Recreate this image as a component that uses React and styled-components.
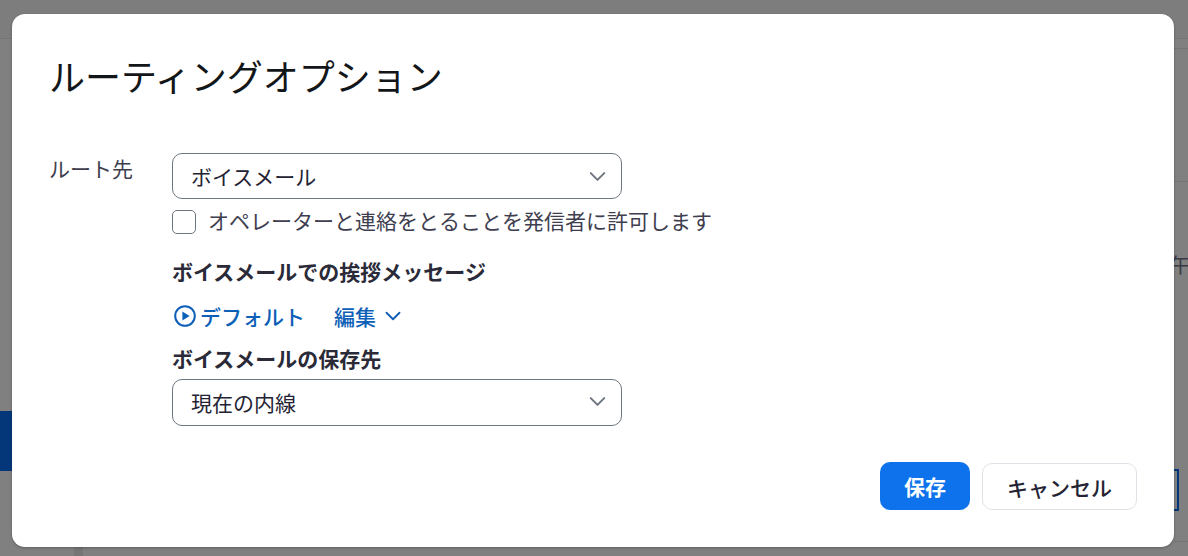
import React from "react";
import styled, { createGlobalStyle } from "styled-components";
import { ChevronDown } from "lucide-react";

const Global = createGlobalStyle`
  html, body { margin: 0; padding: 0; background: #808080; }
  body { font-family: "Noto Sans CJK JP", "Noto Sans", sans-serif; overflow: hidden; }
  * { box-sizing: border-box; }
`;

const Page = styled.div`
  position: relative;
  width: 1188px;
  height: 556px;
  overflow: hidden;
  background: #808080;
`;

const Backdrop = styled.div`
  height: 100%;
  display: flex;
  flex-direction: column;
`;

const TopBar = styled.div`
  height: 39px;
  flex: none;
  border-bottom: 1px solid #757575;
  background: #7d7d7d;
  display: flex;
  justify-content: flex-end;
  gap: 50px;
  padding-right: 58px;
`;

const TopLink = styled.span`
  margin-top: -26px;
  height: 30px;
  font-size: 20.8px;
  line-height: 30px;
  color: #2b2b3a;
`;

const MainRow = styled.div`
  flex: 1;
  display: flex;
  justify-content: space-between;
`;

const NavRail = styled.div`
  width: 83px;
  border-right: 9px solid #767676;
  padding-top: 372px;
`;

const NavItem = styled.div`
  width: 14px;
  height: 60px;
  background: #04377a;
`;

const RightRail = styled.div`
  width: 14px;
  display: flex;
  flex-direction: column;
  align-items: flex-end;
`;

const RailTab = styled.div`
  width: 100%;
  height: 10px;
  flex: none;
  border-bottom: 1px solid #757575;
`;

const RailRule = styled.div`
  width: 100%;
  height: 133px;
  flex: none;
  border-bottom: 1px solid #757575;
`;

const RailText = styled.div`
  width: 100%;
  height: 30px;
  margin-top: 67px;
  text-indent: -4px;
  white-space: nowrap;
  font-size: 20.8px;
  line-height: 30px;
  color: #3a3a46;
`;

const EdgeButton = styled.div`
  width: 5px;
  height: 42px;
  flex: none;
  margin-top: 190px;
  margin-right: 9px;
  border: 2px solid #04377a;
  border-left: 0;
`;

const RailBottomRule = styled.div`
  width: 100%;
  height: 1px;
  flex: none;
  margin-top: 30px;
  background: #757575;
`;

const Dialog = styled.div`
  position: absolute;
  left: 12px;
  top: 14px;
  width: 1162px;
  height: 533px;
  background: #fff;
  border-radius: 13px;
  box-shadow: 0 1px 3px rgba(0, 0, 0, 0.25);
  padding: 34px 37px 37px 38px;
  display: flex;
  flex-direction: column;
`;

const Title = styled.h2`
  margin: 0 0 0 -1px;
  height: 54px;
  font-size: 36px;
  line-height: 54px;
  font-weight: 400;
  color: #131619;
`;

const Form = styled.div`
  margin-top: 51px;
  display: grid;
  grid-template-columns: 122px 450px;
  align-items: start;
`;

const RouteLabel = styled.div`
  font-size: 21px;
  line-height: 30px;
  color: #3e3e4f;
  margin-left: -1px;
`;

const Column = styled.div`
  display: flex;
  flex-direction: column;
`;

const Select = styled.div`
  width: 450px;
  height: 46px;
  padding: 0 10px 0 18px;
  border: 1px solid #6e7680;
  border-radius: 10px;
  display: flex;
  align-items: center;
  justify-content: space-between;
  font-size: 21px;
  color: #232333;
`;

const Chevron = styled(ChevronDown)`
  color: #6e7680;
  flex: none;
`;

const CheckRow = styled.label`
  margin-top: 11px;
  height: 24px;
  display: flex;
  align-items: center;
  gap: 12px;
  font-size: 21px;
  color: #3e3e4f;
  white-space: nowrap;
`;

const CheckText = styled.span`
  margin-top: -5px;
`;

const Box = styled.span`
  width: 24px;
  height: 24px;
  flex: none;
  border: 1px solid #6e7680;
  border-radius: 5px;
  background: #fff;
`;

const SectionLabel = styled.div`
  font-size: 21px;
  line-height: 30px;
  font-weight: 700;
  color: #2a2a38;
  margin-top: ${(p) => p.$top}px;
`;

const Greeting = styled.div`
  margin-top: 15px;
  height: 30px;
  display: flex;
  align-items: center;
  color: #0e5fb8;
  font-size: 21px;
  font-weight: 500;
`;

const PlayLink = styled.span`
  display: flex;
  align-items: center;
  gap: 3px;
  margin-left: 1px;
  margin-right: 29px;
`;

const EditLink = styled.span`
  display: flex;
  align-items: center;
  gap: 4px;
`;

const LowerSelect = styled(Select)`
  margin-top: 6px;
  height: 47px;
  padding-bottom: 2px;
`;

const Footer = styled.div`
  margin-top: auto;
  display: flex;
  justify-content: flex-end;
  align-items: flex-end;
  gap: 12px;
`;

const SaveButton = styled.button`
  width: 90px;
  height: 48px;
  border: 0;
  border-radius: 10px;
  background: #0e72ed;
  color: #fff;
  font: 700 21px "Noto Sans CJK JP", sans-serif;
`;

const CancelButton = styled.button`
  width: 155px;
  height: 47px;
  border: 1px solid #dfe3e8;
  border-radius: 10px;
  background: #fff;
  color: #232333;
  font: 500 21px "Noto Sans CJK JP", sans-serif;
`;

const PlayIcon = () => (
  <svg width="24" height="24" viewBox="0 0 24 24" fill="none" aria-hidden="true">
    <circle cx="12" cy="12" r="9.8" stroke="currentColor" strokeWidth="2" />
    <path d="M9.4 7.4 16.6 12 9.4 16.6Z" fill="currentColor" />
  </svg>
);

export default function App() {
  return (
    <>
      <Global />
      <Page>
        <Backdrop>
          <TopBar>
            <TopLink>アプリケーション</TopLink>
            <TopLink>参加</TopLink>
            <TopLink>ホスト</TopLink>
          </TopBar>
          <MainRow>
            <NavRail>
              <NavItem />
            </NavRail>
            <RightRail>
              <RailTab />
              <RailRule />
              <RailText>午後</RailText>
              <EdgeButton />
              <RailBottomRule />
            </RightRail>
          </MainRow>
        </Backdrop>
        <Dialog>
          <Title>ルーティングオプション</Title>
          <Form>
            <RouteLabel>ルート先</RouteLabel>
            <Column>
              <Select>
                ボイスメール
                <Chevron size={27} strokeWidth={1.8} />
              </Select>
              <CheckRow>
                <Box />
                <CheckText>オペレーターと連絡をとることを発信者に許可します</CheckText>
              </CheckRow>
              <SectionLabel $top={22}>ボイスメールでの挨拶メッセージ</SectionLabel>
              <Greeting>
                <PlayLink>
                  <PlayIcon />
                  デフォルト
                </PlayLink>
                <EditLink>
                  編集
                  <ChevronDown size={26} strokeWidth={1.7} />
                </EditLink>
              </Greeting>
              <SectionLabel $top={12}>ボイスメールの保存先</SectionLabel>
              <LowerSelect>
                現在の内線
                <Chevron size={27} strokeWidth={1.8} />
              </LowerSelect>
            </Column>
          </Form>
          <Footer>
            <SaveButton>保存</SaveButton>
            <CancelButton>キャンセル</CancelButton>
          </Footer>
        </Dialog>
      </Page>
    </>
  );
}
